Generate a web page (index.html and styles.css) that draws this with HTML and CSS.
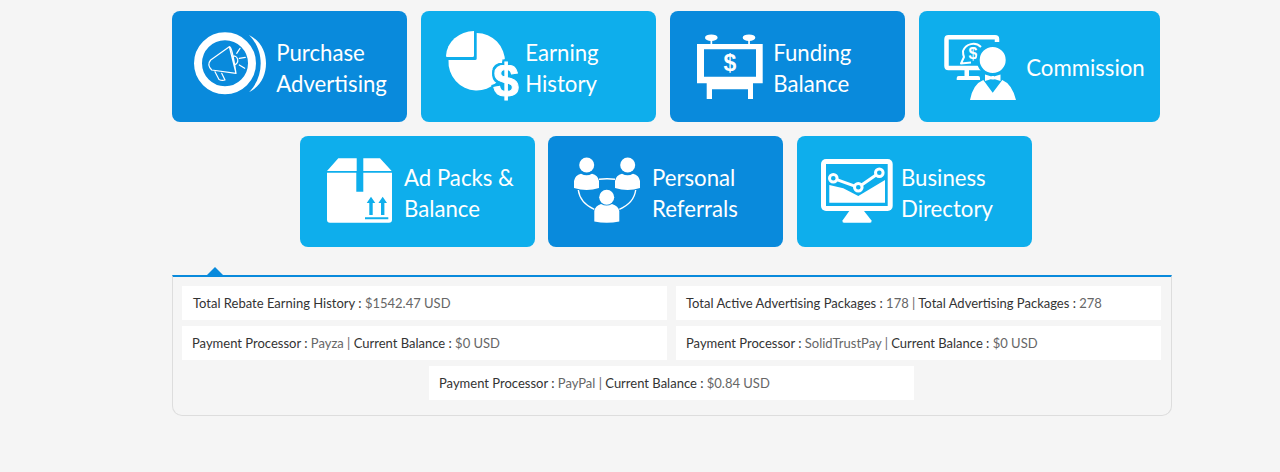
FILE: index.html
```html
<!DOCTYPE html>
<html lang="en">
<head>
<meta charset="utf-8">
<title>Dashboard</title>
<link rel="stylesheet" href="styles.css">
</head>
<body>
<main class="page">
  <section class="tiles">
    <div class="row row-top">
      <a class="tile dark">
        <svg class="icon" viewBox="0 0 84 81">
          <circle class="ring" cx="37" cy="37.3" r="27"/>
          <path class="solid" d="M61 9C73 15 78 26 78 37.3C78 49 73 60 61 66.3C69 58 72.7 48 72.7 37.3C72.7 27 69 17 61 9Z"/>
          <path class="thin" d="M41.3 20.7L22.7 34Q18.5 39 23.7 44L48 47.3ZM41.3 20.7Q44 20 48 47.3M27 45.7L31 53.5Q34 55 37 54L33.7 47.3M44.5 30A4.5 4.5 0 1 1 46 39M48.7 27.3L52 22.3M51.3 32.3L57.3 31.3M51.3 39L56.7 42.3"/>
        </svg>
        <span class="label">Purchase<br>Advertising</span>
      </a>
      <a class="tile light">
        <svg class="icon" viewBox="0 0 84 81">
          <path class="solid" d="M37 5A28 26 0 0 0 9 30Q9 31 10 31H35.5Q37 31 37 29.5Z"/>
          <path class="solid" d="M39.7 7V32.5Q39.7 34 38 34H11.5A28.3 28.8 0 1 0 39.7 7Z"/>
          <text class="dollar-big" x="69" y="71">$</text>
        </svg>
        <span class="label">Earning<br>History</span>
      </a>
      <a class="tile dark tight">
        <svg class="icon" viewBox="0 0 84 81">
          <ellipse class="solid" cx="25.3" cy="11.7" rx="6.3" ry="3.3"/>
          <ellipse class="solid" cx="63" cy="11.7" rx="6.3" ry="3.3"/>
          <path class="solid" d="M24.5 14H26.2V18H24.5ZM62.2 14H63.9V18H62.2ZM11 18H76.7V57.3H67V73H62V63.3H26V73H20.7V57.3H11ZM18 23.3V50.7H70V23.3Z" fill-rule="evenodd"/>
          <text class="dollar-sign" x="44" y="45">$</text>
        </svg>
        <span class="label">Funding<br>Balance</span>
      </a>
      <a class="tile light wide">
        <svg class="icon" viewBox="0 0 84 81">
          <path class="frame" d="M62 16V13Q62 11.300 60 11.300H13.500Q11.500 11.300 11.500 13.300V40Q11.500 42 13.500 42H46"/>
          <path class="solid" d="M29.500 44H34V50H43Q45 50 45 52V54H21.700V52Q21.700 50 23.700 50H29.500Z"/>
          <path class="bubble" d="M46 21A11 11 0 0 0 28 25Q28 29 29 31L26 37.500L36 36.500"/>
          <text class="dollar-mini" x="38" y="33">$</text>
          <circle class="halo" cx="57.700" cy="34" r="14.500"/>
          <path class="solid" d="M50 48.500L56.500 50.500V53L50 55ZM65.500 48.500L59 50.500V53L65.500 55ZM56.500 50H59V53.500H56.500ZM48.300 54L57.700 66.700L67.300 54Q77 58 81 74H35Q38 58 48.300 54Z"/>
        </svg>
        <span class="label">Commission</span>
      </a>
    </div>
    <div class="row row-bottom">
      <a class="tile light">
        <svg class="icon" viewBox="0 0 84 81">
          <path class="solid" d="M11 20L22.300 7.300H40.700V20ZM47.300 7.300H64L75.700 20H47.300Z"/>
          <path class="solid" fill-rule="evenodd" d="M11 21.700H40.300V40.700H47.300V21.700H76V68.700Q76 71.700 73 71.700H14Q11 71.700 11 68.700Z"/>
          <path class="cut" d="M55 45.700L59.300 52H56.700V64H53.300V52H50.700ZM66.700 45.700L71 52H68.400V64H65V52H62.400ZM49 66.300H72.300V68.300H49Z"/>
        </svg>
        <span class="label">Ad Packs &amp;<br>Balance</span>
      </a>
      <a class="tile dark">
        <svg class="icon" viewBox="0 0 84 81">
          <path class="line" d="M35 28.300Q43 27.300 51 28.300M14.300 39Q16 52 30.300 58.300M71.700 39Q70 52 55.300 58.300"/>
          <circle class="solid" cx="22.700" cy="14" r="7.500"/>
          <path class="solid" d="M10 30Q11 24 17 22.700Q22.700 26 28 22.700Q34 24 35 30V37Q22.700 41 10 37Z"/>
          <circle class="solid" cx="63.700" cy="14" r="7.500"/>
          <path class="solid" d="M51 30Q52 24 58 22.700Q63.700 26 69 22.700Q75 24 76 30V37Q63.700 41 51 37Z"/>
          <circle class="solid" cx="42.700" cy="46.300" r="7.500"/>
          <path class="solid" d="M30.300 60Q31 55 37 53Q42.700 56 48 53Q54.500 55 55.300 60V70.500Q42.700 73 30.300 70.500Z"/>
        </svg>
        <span class="label">Personal<br>Referrals</span>
      </a>
      <a class="tile light">
        <svg class="icon" viewBox="0 0 84 81">
          <rect class="solid" x="8" y="8" width="71.700" height="52" rx="5"/>
          <path class="solid" d="M36.300 60H51L58.500 69.500Q59 71.700 57 71.700H31Q29 71.700 29.500 69.500Z"/>
          <rect class="hole" x="13" y="13" width="61.700" height="42"/>
          <path class="solid" d="M16.300 34L30.300 37.300L45.300 45L72 29V51.700H16.300Z"/>
          <path class="line-bold" d="M20.300 27.300L45.300 36.300L66.300 21.700"/>
          <circle class="marker" cx="20.300" cy="27.300" r="3.800"/>
          <circle class="marker" cx="45.300" cy="36.300" r="3.800"/>
          <circle class="marker" cx="66.300" cy="21.700" r="3.800"/>
        </svg>
        <span class="label">Business<br>Directory</span>
      </a>
    </div>
  </section>

  <section class="panel">
    <div class="stat"><span>Total Rebate Earning History :</span> <em>$1542.47 USD</em></div>
    <div class="stat"><span>Total Active Advertising Packages :</span> <em>178 |</em> <span>Total Advertising Packages :</span> <em>278</em></div>
    <div class="stat"><span>Payment Processor :</span> <em>Payza |</em> <span>Current Balance :</span> <em>$0 USD</em></div>
    <div class="stat"><span>Payment Processor :</span> <em>SolidTrustPay |</em> <span>Current Balance :</span> <em>$0 USD</em></div>
    <div class="stat"><span>Payment Processor :</span> <em>PayPal |</em> <span>Current Balance :</span> <em>$0.84 USD</em></div>
  </section>
</main>
</body>
</html>
```
FILE: styles.css
```css
* {
  box-sizing: border-box;
}

html,
body {
  margin: 0;
  background: #f5f5f5;
}

body {
  font-family: Lato, "Liberation Sans", sans-serif;
  overflow: hidden;
}

.page {
  width: 1000px;
  margin-left: 172px;
  padding-top: 11px;
}

.tiles {
  width: 988px;
}

.row {
  display: flex;
  justify-content: center;
  gap: 14px;
  margin-bottom: 14px;
}

.row-bottom {
  margin-bottom: 28px;
}

.row-bottom .tile:first-child {
  margin-right: -1px;
}

.tile {
  display: flex;
  align-items: center;
  min-width: 235px;
  height: 111px;
  padding: 0 15px 0 16px;
  border-radius: 8px;
  color: #fff;
}

.dark {
  background: #098adc;
  --tile: #098adc;
}

.light {
  background: #0eaeec;
  --tile: #0eaeec;
}

.icon {
  flex: none;
  width: 84px;
  height: 81px;
  margin-right: 4px;
}

.tight .icon {
  margin-right: 3px;
}

.wide .icon {
  margin-right: 7px;
}

.label {
  padding-top: 2px;
  font-size: 22.2px;
  line-height: 31px;
  white-space: nowrap;
}

.solid {
  fill: #fff;
}

.ring {
  fill: none;
  stroke: #fff;
  stroke-width: 8;
}

.thin {
  fill: none;
  stroke: #fff;
  stroke-width: 1.2;
  stroke-linejoin: round;
  stroke-linecap: round;
}

.frame {
  fill: none;
  stroke: #fff;
  stroke-width: 4.5;
}

.bubble {
  fill: none;
  stroke: #fff;
  stroke-width: 2;
  stroke-linejoin: round;
}

.halo {
  fill: #fff;
  stroke: var(--tile);
  stroke-width: 3;
}

.cut,
.hole {
  fill: var(--tile);
}

.line {
  fill: none;
  stroke: #fff;
  stroke-width: 1.4;
}

.line-bold {
  fill: none;
  stroke: #fff;
  stroke-width: 3;
}

.marker {
  fill: var(--tile);
  stroke: #fff;
  stroke-width: 3;
}

.dollar-big,
.dollar-sign,
.dollar-mini {
  font-family: "Liberation Sans", sans-serif;
  font-weight: 700;
  text-anchor: middle;
  fill: #fff;
}

.dollar-big {
  font-size: 46px;
  stroke: #fff;
  stroke-width: 1;
  filter: drop-shadow(-2px 0 0 var(--tile)) drop-shadow(0 -2px 0 var(--tile)) drop-shadow(2px 0 0 var(--tile)) drop-shadow(0 2px 0 var(--tile));
}

.dollar-sign {
  font-size: 23px;
}

.dollar-mini {
  font-size: 16px;
}

.panel {
  position: relative;
  display: flex;
  flex-wrap: wrap;
  justify-content: center;
  gap: 6px 9px;
  padding: 9px 10px 15px 9px;
  border: 1px solid #ddd;
  border-top: 2px solid #098adc;
  border-radius: 0 0 10px 10px;
  font-size: 13px;
  line-height: 34px;
}

.panel::before {
  content: "";
  position: absolute;
  top: -10px;
  left: 34px;
  border: 8px solid transparent;
  border-top: 0;
  border-bottom-color: #098adc;
}

.stat {
  width: 485px;
  height: 34px;
  padding-left: 10px;
  background: #fff;
  color: #333;
  white-space: nowrap;
}

.stat:first-child {
  padding-left: 11px;
}

.stat em {
  font-style: normal;
  color: #666;
}
```
